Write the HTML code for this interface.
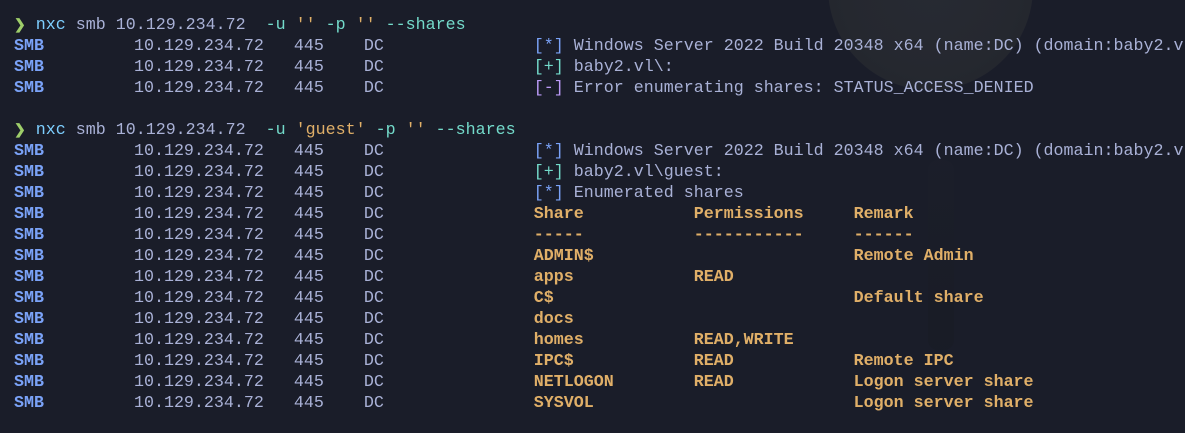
<!DOCTYPE html>
<html><head><meta charset="utf-8"><style>
html,body{margin:0;padding:0;}
body{width:1185px;height:433px;overflow:hidden;background:#1a1d29;position:relative;}
.moon{position:absolute;left:828px;top:-115px;width:205px;height:205px;border-radius:50%;background:radial-gradient(circle at 50% 50%,#272a33 0%,#25282f 60%,#20232c 100%);}
.fig{position:absolute;left:928px;top:160px;width:26px;height:190px;background:linear-gradient(#1c1f2a,#181b24);border-radius:10px;opacity:.7}
pre{position:absolute;left:14px;top:15px;margin:0;font-family:"Liberation Mono",monospace;font-size:16.66px;line-height:21px;color:#a9b1d6;}
.s{color:#7aa2f7;font-weight:bold}
.g{color:#e0af68;font-weight:bold}
.p{color:#9ece6a;font-weight:bold;font-size:14px;line-height:0}
.t{color:#73daca}
.c{color:#7dcfff}
.q{color:#e0af68}
.b{color:#7aa2f7}
.gr{color:#73daca}
.r{color:#bb9af7}
</style></head><body>
<div class="moon"></div><div class="fig"></div>
<pre><span class="p">❯</span> <span class="c">nxc</span> smb 10.129.234.72  <span class="t">-u</span> <span class="q">''</span> <span class="t">-p</span> <span class="q">''</span> <span class="t">--shares</span>
<span class="s">SMB</span>         10.129.234.72   445    DC               <span class="b">[*]</span> Windows Server 2022 Build 20348 x64 (name:DC) (domain:baby2.vl)
<span class="s">SMB</span>         10.129.234.72   445    DC               <span class="gr">[+]</span> baby2.vl\:
<span class="s">SMB</span>         10.129.234.72   445    DC               <span class="r">[-]</span> Error enumerating shares: STATUS_ACCESS_DENIED

<span class="p">❯</span> <span class="c">nxc</span> smb 10.129.234.72  <span class="t">-u</span> <span class="q">'guest'</span> <span class="t">-p</span> <span class="q">''</span> <span class="t">--shares</span>
<span class="s">SMB</span>         10.129.234.72   445    DC               <span class="b">[*]</span> Windows Server 2022 Build 20348 x64 (name:DC) (domain:baby2.vl)
<span class="s">SMB</span>         10.129.234.72   445    DC               <span class="gr">[+]</span> baby2.vl\guest:
<span class="s">SMB</span>         10.129.234.72   445    DC               <span class="b">[*]</span> Enumerated shares
<span class="s">SMB</span>         10.129.234.72   445    DC               <span class="g">Share           Permissions     Remark</span>
<span class="s">SMB</span>         10.129.234.72   445    DC               <span class="g">-----           -----------     ------</span>
<span class="s">SMB</span>         10.129.234.72   445    DC               <span class="g">ADMIN$                          Remote Admin</span>
<span class="s">SMB</span>         10.129.234.72   445    DC               <span class="g">apps            READ</span>
<span class="s">SMB</span>         10.129.234.72   445    DC               <span class="g">C$                              Default share</span>
<span class="s">SMB</span>         10.129.234.72   445    DC               <span class="g">docs</span>
<span class="s">SMB</span>         10.129.234.72   445    DC               <span class="g">homes           READ,WRITE</span>
<span class="s">SMB</span>         10.129.234.72   445    DC               <span class="g">IPC$            READ            Remote IPC</span>
<span class="s">SMB</span>         10.129.234.72   445    DC               <span class="g">NETLOGON        READ            Logon server share</span>
<span class="s">SMB</span>         10.129.234.72   445    DC               <span class="g">SYSVOL                          Logon server share</span></pre>
</body></html>
